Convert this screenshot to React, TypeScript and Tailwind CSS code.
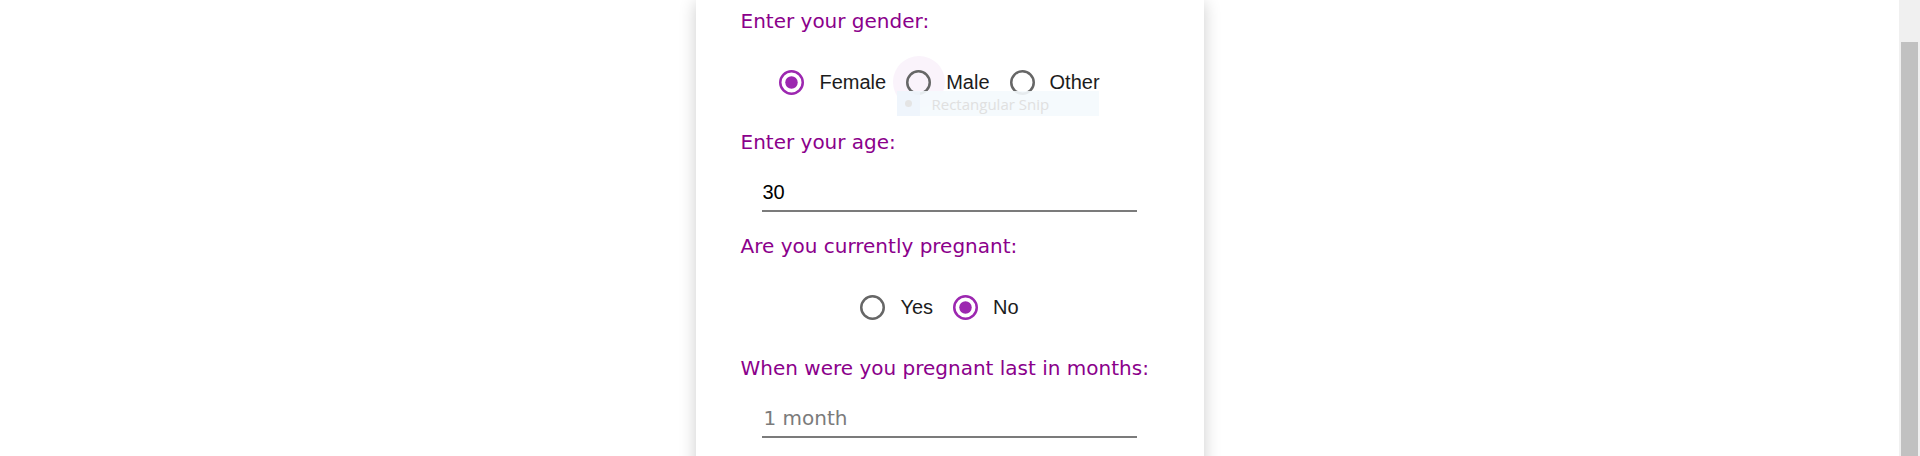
// App.tsx
import { useState } from 'react';

type Option = { value: string; label: string };

const labelFont = "font-['DejaVu_Sans',sans-serif]";

const RadioIcon = ({ checked }: { checked: boolean }) => (
  <svg viewBox="2 2 20 20" className="w-[25px] h-[25px] shrink-0">
    <circle
      cx="12"
      cy="12"
      r="9"
      fill="none"
      strokeWidth="2"
      stroke={checked ? '#9c27b0' : '#666666'}
    />
    {checked && <circle cx="12" cy="12" r="5" fill="#9c27b0" />}
  </svg>
);

const RadioRow = ({
  options,
  value,
  onChange,
  hovered,
}: {
  options: Option[];
  value: string;
  onChange: (v: string) => void;
  hovered?: string;
}) => (
  <div className="h-[52px] flex items-center justify-center mr-[45px]">
    {options.map((opt) => (
      <label
        key={opt.value}
        className="flex items-center mr-[20px] cursor-pointer"
        onClick={() => onChange(opt.value)}
      >
        <span className="relative flex items-center justify-center">
          {/* hover ripple */}
          {hovered === opt.value && (
            <span className="absolute w-[52px] h-[52px] rounded-full bg-[#faf3fb]" />
          )}
          <span className="relative">
            <RadioIcon checked={value === opt.value} />
          </span>
        </span>
        <span className="ml-[15px] text-[20px] leading-[24px] text-[#1c1c1c] font-['Liberation_Sans',Arial,sans-serif]">
          {opt.label}
        </span>
      </label>
    ))}
  </div>
);

const FieldLabel = ({ children, className = '' }: { children: string; className?: string }) => (
  <div className={`text-[20px] leading-[24px] text-[#8b008b] ${labelFont} ${className}`}>{children}</div>
);

export default function App() {
  const [gender, setGender] = useState('female');
  const [pregnant, setPregnant] = useState('no');
  const [age, setAge] = useState('30');
  const [months, setMonths] = useState('');

  return (
    <div className="h-[456px] w-full overflow-hidden flex bg-white">
      <div className="flex-1 flex justify-center">
        <div className="relative w-[508px] h-[520px] bg-white shadow-[0_2px_16px_rgba(0,0,0,0.2)] pl-[45px] pt-[9px]">
          <FieldLabel>Enter your gender:</FieldLabel>
          <div className="mt-[23px]">
            <RadioRow
              options={[
                { value: 'female', label: 'Female' },
                { value: 'male', label: 'Male' },
                { value: 'other', label: 'Other' },
              ]}
              value={gender}
              onChange={setGender}
              hovered="male"
            />
          </div>

          <FieldLabel className="mt-[22px]">Enter your age:</FieldLabel>
          <div className="mt-[26px] ml-[21px] w-[375px] border-b-2 border-[#7b7b7b] pb-[5px]">
            <input
              value={age}
              onChange={(e) => setAge(e.target.value)}
              className="w-full h-[24px] leading-[24px] text-[20px] text-black bg-transparent outline-none pl-[1px] font-['Liberation_Sans',Arial,sans-serif]"
            />
          </div>

          <FieldLabel className="mt-[22px]">Are you currently pregnant:</FieldLabel>
          <div className="mt-[23px]">
            <RadioRow
              options={[
                { value: 'yes', label: 'Yes' },
                { value: 'no', label: 'No' },
              ]}
              value={pregnant}
              onChange={setPregnant}
            />
          </div>

          <FieldLabel className="mt-[23px]">When were you pregnant last in months:</FieldLabel>
          <div className="mt-[26px] ml-[21px] w-[375px] border-b-2 border-[#7b7b7b] pb-[5px]">
            <input
              value={months}
              onChange={(e) => setMonths(e.target.value)}
              placeholder="1 month"
              className="w-full h-[24px] leading-[24px] text-[20px] text-black bg-transparent outline-none pl-[2px] font-['DejaVu_Sans',sans-serif] placeholder:text-[#7b7b7b]"
            />
          </div>

          {/* screen capture tooltip left over in the shot */}
          <div className="absolute left-[201px] top-[91px] w-[202px] h-[25px] flex items-center bg-[#f4f9fd]/90">
            <div className="w-[23px] h-full flex items-center justify-center bg-[#eef4fb]/80">
              <span className="w-[7px] h-[7px] rounded-full bg-[#e4e4e4]" />
            </div>
            <span className="ml-[12px] text-[15px] leading-[20px] text-[#e0e0e0] font-['Open_Sans',sans-serif]">
              Rectangular Snip
            </span>
          </div>
        </div>
      </div>

      {/* page scrollbar */}
      <div className="w-[21px] h-full bg-[#f0f0f0] pt-[42px] pl-[2px] pr-[2px]">
        <div className="w-full h-full bg-[#c1c1c1]" />
      </div>
    </div>
  );
}
